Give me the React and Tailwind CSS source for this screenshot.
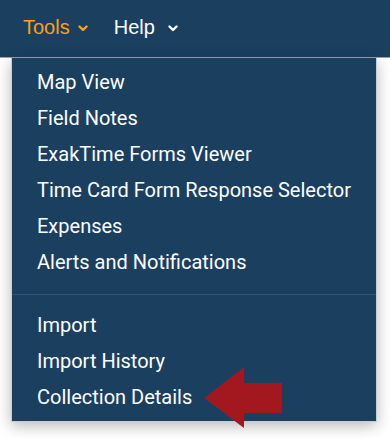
import React from "react";

const topItems = [
  "Map View",
  "Field Notes",
  "ExakTime Forms Viewer",
  "Time Card Form Response Selector",
  "Expenses",
  "Alerts and Notifications",
];

const bottomItems = ["Import", "Import History", "Collection Details"];

const Chevron = ({ color, gap }) => (
  <svg width="10" height="7" viewBox="0 0 10 7" className={`${gap} mt-[3px]`}>
    <path d="M1.5 1.5 L5 5 L8.5 1.5" fill="none" stroke={color} strokeWidth="2.4" strokeLinecap="round" strokeLinejoin="round" />
  </svg>
);

const MenuItem = ({ label }) => (
  <div className="flex h-[36px] items-center pl-[25px] text-[20px] font-normal text-white">
    {label}
  </div>
);

export default function App() {
  return (
    <div className="h-[438px] w-[390px] overflow-hidden bg-white font-['Roboto',sans-serif]">
      <div className="flex h-[58px] items-start border-b border-[#9aa3ab] bg-[#1b3f5f] pl-[23px] pt-[12px] font-['Liberation_Sans',Arial,sans-serif] text-[20px]">
        <div className="flex items-center text-[#f7a21b]">
          Tools
          <Chevron color="#f7a21b" gap="ml-[8px]" />
        </div>
        <div className="ml-[26px] flex items-center text-white">
          Help
          <Chevron color="#ffffff" gap="ml-[13px]" />
        </div>
      </div>

      <div className="relative ml-[11px] w-[366px] border border-t-0 border-[#c9cdd1] bg-[#1b3f5f] pb-[6px] pt-[6px] shadow-[0_4px_14px_rgba(0,0,0,0.28)]">
        {topItems.map((item) => (
          <MenuItem key={item} label={item} />
        ))}
        <div className="mb-[12px] mt-[14px] h-px bg-[#2c5578]" />
        {bottomItems.map((item) => (
          <MenuItem key={item} label={item} />
        ))}

        <svg
          className="absolute left-[192px] top-[308px]"
          width="80"
          height="63"
          viewBox="0 0 80 63"
        >
          <polygon points="0,32 40,1 40,17 78,17 78,47 40,47 40,62" fill="#a3171e" />
        </svg>
      </div>
    </div>
  );
}
